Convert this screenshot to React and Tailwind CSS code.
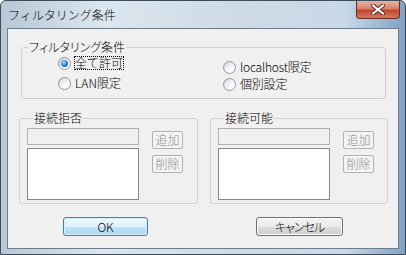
const font = { fontFamily: '"Noto Sans CJK JP", "Noto Sans", sans-serif' };

const Radio = ({ checked, label, focus }) => (
    <div className="flex h-[14px] items-center gap-[3px]">
        <span className="flex h-[13px] w-[13px] items-center justify-center rounded-full border border-[#8c969e] bg-[linear-gradient(135deg,#cfd4d8,#f8f9fa_60%,#ffffff)]">
            {checked && <span className="h-[7px] w-[7px] rounded-full bg-[radial-gradient(circle_at_40%_35%,#a9dcff,#2a78c8_55%,#123f7a)]" />}
        </span>
        <span className={`border px-0 text-[12px] leading-[12px] text-black ${focus ? 'border-dotted border-black' : 'border-transparent'}`}>{label}</span>
    </div>
);

const SmallButton = ({ children }) => (
    <div className="flex h-[18px] w-[31px] items-center justify-center rounded-[2px] border border-[#adb2b5] bg-[#f4f4f4] text-[12px] leading-none text-[#8a8a8a]">
        {children}
    </div>
);

// 接続拒否 / 接続可能 のグループ
const ListGroup = ({ title, width }) => (
    <fieldset className={`rounded-[3px] border border-[#cbd2d8] pb-[3px] pl-[7px] ${width}`}>
        <legend className="ml-[6px] px-[1px] text-[12px] leading-[12px] text-black">{title}</legend>
        <div className="flex gap-[13px]">
            <div className="flex flex-col gap-[3px] pt-[4px]">
                <div className="h-[17px] w-[112px] border border-[#b0b0b0] bg-[#f0f0f0]" />
                <div className="h-[52px] w-[112px] border border-[#828790] bg-white" />
            </div>
            <div className="flex flex-col gap-[6px] pt-[7px]">
                <SmallButton>追加</SmallButton>
                <SmallButton>削除</SmallButton>
            </div>
        </div>
    </fieldset>
);

const App = () => {
    return (
        <div style={font} className="flex h-[255px] w-[406px] flex-col overflow-hidden rounded-t-[6px] border border-[#3e4b58] bg-[linear-gradient(90deg,#b7c7d6_0%,#dbe6ef_25%,#cfdbe6_55%,#c9d9e8_85%,#7ea2c6_100%)] font-light">
            {/* TITLE BAR */}
            <div className="flex h-[27px] items-start justify-between">
                <div className="pl-[7px] pt-[7px] text-[12px] leading-[14px] text-black">フィルタリング条件</div>
                <div className="mr-[5px] flex h-[18px] w-[44px] items-center justify-center rounded-b-[4px] border border-t-0 border-[#6b2a22] bg-[linear-gradient(180deg,#e9b2a3_0%,#d9806b_45%,#c2452f_55%,#d37a5c_100%)]">
                    <svg width="14" height="11" viewBox="0 0 14 11">
                        <path d="M2 1.5 L12 9.5 M12 1.5 L2 9.5" stroke="#5a2a26" strokeWidth="4" strokeLinecap="round" />
                        <path d="M2 1.5 L12 9.5 M12 1.5 L2 9.5" stroke="#ffffff" strokeWidth="2.2" strokeLinecap="round" />
                    </svg>
                </div>
            </div>

            {/* CLIENT AREA */}
            <div className="mx-[6px] mb-[5px] flex h-[221px] flex-col border border-[#6f7d8b] bg-[#f0f0f0] pl-[13px]">
                <fieldset className="mt-[12px] w-[365px] rounded-[3px] border border-[#cbd2d8]">
                    <legend className="ml-[6px] px-[1px] text-[12px] leading-[12px] text-black [font-feature-settings:'palt']">フィルタリング条件</legend>
                    <div className="flex pb-[7px] pl-[36px]">
                        <div className="flex w-[165px] flex-col gap-[6px] pt-[3px]">
                            <Radio checked focus label="全て許可" />
                            <Radio label="LAN限定" />
                        </div>
                        <div className="flex flex-col gap-[3px] pt-[7px] tracking-[-0.2px]">
                            <Radio label="localhost限定" />
                            <Radio label="個別設定" />
                        </div>
                    </div>
                </fieldset>

                <div className="-ml-[2px] mt-[13px] flex gap-[12px]">
                    <ListGroup title="接続拒否" width="w-[179px]" />
                    <ListGroup title="接続可能" width="w-[178px]" />
                </div>

                <div className="mt-[13px] flex">
                    <div className="ml-[42px] flex h-[19px] w-[85px] items-center justify-center rounded-[3px] border border-[#3c7fb1] bg-[linear-gradient(180deg,#eef8fe_0%,#dff1fb_50%,#c2e4f6_51%,#aed9f0_100%)] text-[12px] leading-none text-black shadow-[inset_0_0_0_1px_#d4f0fe]">
                        OK
                    </div>
                    <div className="ml-[108px] flex h-[19px] w-[87px] items-center justify-center rounded-[3px] border border-[#707070] bg-[linear-gradient(180deg,#f3f3f3_0%,#ebebeb_50%,#dddddd_51%,#cfcfcf_100%)] text-[12px] leading-none tracking-[-1px] text-black shadow-[inset_0_0_0_1px_#fcfcfc] [font-feature-settings:'palt']">
                        キャンセル
                    </div>
                </div>
            </div>
        </div>
    );
};

export default App;
